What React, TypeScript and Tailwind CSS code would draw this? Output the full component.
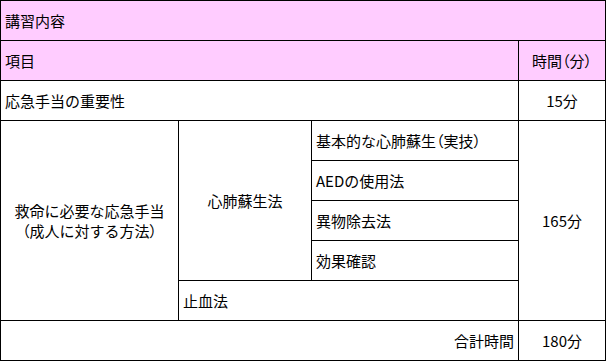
import React from 'react';

const font = { fontFamily: '"Noto Sans CJK JP", "Noto Sans", sans-serif' };

const cell = 'flex items-center border-r border-b border-black px-[4px] text-[15px] leading-none text-black';

// proportional-width bracket, as in the original sheet
const P = ({ children }: { children: React.ReactNode }) => (
  <span className="[font-feature-settings:'palt']">{children}</span>
);

export default function App() {
  return (
    <div className="bg-white w-[608px] h-[362px]" style={font}>
      <div className="grid w-[606px] grid-cols-[178px_133px_207px_87px] grid-rows-[repeat(9,40px)] border-l border-t border-black">
        <div className={`${cell} col-start-1 col-span-4 row-start-1 bg-[#ffccff]`}>講習内容</div>

        <div className={`${cell} col-start-1 col-span-3 row-start-2 bg-[#ffccff]`}>項目</div>
        <div className={`${cell} col-start-4 row-start-2 justify-center bg-[#ffccff]`}>
          時間<P>（</P>分<P>）</P>
        </div>

        <div className={`${cell} col-start-1 col-span-3 row-start-3`}>応急手当の重要性</div>
        <div className={`${cell} col-start-4 row-start-3 justify-center`}>15分</div>

        <div className={`${cell} col-start-1 row-start-4 row-span-5 flex-col justify-center gap-[5px] text-center`}>
          <span>救命に必要な応急手当</span>
          <span>
            <P>（</P>成人に対する方法<P>）</P>
          </span>
        </div>
        <div className={`${cell} col-start-2 row-start-4 row-span-4 justify-center`}>心肺蘇生法</div>
        <div className={`${cell} col-start-3 row-start-4`}>
          基本的な心肺蘇生<P>（</P>実技<P>）</P>
        </div>
        <div className={`${cell} col-start-3 row-start-5`}>AEDの使用法</div>
        <div className={`${cell} col-start-3 row-start-6`}>異物除去法</div>
        <div className={`${cell} col-start-3 row-start-7`}>効果確認</div>
        <div className={`${cell} col-start-2 col-span-2 row-start-8`}>止血法</div>
        <div className={`${cell} col-start-4 row-start-4 row-span-5 justify-center`}>165分</div>

        <div className={`${cell} col-start-1 col-span-3 row-start-9 justify-end`}>合計時間</div>
        <div className={`${cell} col-start-4 row-start-9 justify-center`}>180分</div>
      </div>
    </div>
  );
}
